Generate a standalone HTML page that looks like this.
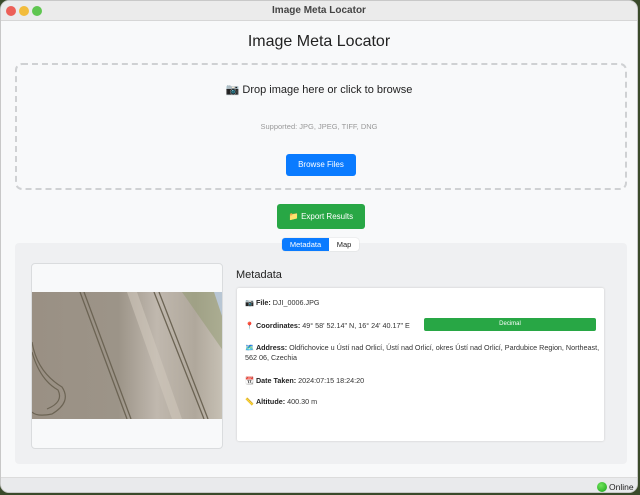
<!DOCTYPE html>
<html><head><meta charset="utf-8"><style>
*{margin:0;padding:0;box-sizing:border-box}
body{width:640px;height:495px;background:#3a4a2a;font-family:"Liberation Sans","DejaVu Sans",sans-serif;position:relative;overflow:hidden}
.win{position:absolute;left:0;top:0;width:638px;height:493px;background:#f8f9fa;border-radius:9px;overflow:hidden;border:1px solid #c8c8c8}
.tb{height:20px;background:#ebebeb;border-bottom:1px solid #d6d6d6;text-align:center;font-size:10px;font-weight:bold;color:#444;line-height:20px;position:relative}
.d{position:absolute;top:5px;width:10px;height:10px;border-radius:50%}
.abs{position:absolute}
h1{position:absolute;left:0;right:0;top:32px;text-align:center;font-size:16px;font-weight:normal;color:#222}
.drop{left:14px;top:62px;width:612px;height:127px;border:2px dashed #cfd1d3;border-radius:7px}
.btn{color:#fff;font-size:8px;text-align:center;border-radius:3px}
.panel{left:14px;top:242px;width:612px;height:221px;background:#eff0f2;border-radius:4px}
.card{left:30px;top:262px;width:192px;height:186px;background:#f8f9fa;border:1px solid #dadcde;border-radius:4px;overflow:hidden}
.meta{left:236px;top:287px;width:367px;height:153px;background:#fff;box-shadow:0 0 2px #c8c8c8;border-radius:2px;font-size:7.2px;color:#333}
.meta div{position:absolute;left:8px}
b{color:#222}
</style></head><body>
<div class="win">
<div class="tb"><span class="d" style="left:5px;background:#ec5f57"></span><span class="d" style="left:18px;background:#f2bc3c"></span><span class="d" style="left:31px;background:#5fc650"></span>Image Meta Locator</div>
<h1>Image Meta Locator</h1>
<div class="abs drop"></div>
<div class="abs" style="left:0;right:0;top:82px;text-align:center;font-size:11px;color:#222">📷 Drop image here or click to browse</div>
<div class="abs" style="left:0;right:0;top:121px;text-align:center;font-size:7.5px;color:#999">Supported: JPG, JPEG, TIFF, DNG</div>
<div class="abs btn" style="left:285px;top:153px;width:70px;height:22px;line-height:22px;background:#0a7bff">Browse Files</div>
<div class="abs btn" style="left:276px;top:203px;width:88px;height:25px;line-height:25px;background:#28a745">📁 Export Results</div>
<div class="abs panel"></div>
<div class="abs" style="left:281px;top:237px;width:77px;height:13px;background:#fff;border-radius:3px;font-size:7.5px;line-height:13px;box-shadow:0 0 1px #bbb"><span style="position:absolute;left:0;width:47px;height:13px;background:#0a7bff;color:#fff;text-align:center;border-radius:3px 0 0 3px">Metadata</span><span style="position:absolute;left:47px;width:30px;text-align:center;color:#222">Map</span></div>
<div class="abs card"><svg class="abs" style="left:0;top:28px" width="192" height="127" viewBox="0 0 192 127">
<defs><linearGradient id="g" x1="0" x2="1"><stop offset="0" stop-color="#9a9084"/><stop offset="0.45" stop-color="#9c9488"/><stop offset="0.65" stop-color="#c0b8ae"/><stop offset="0.85" stop-color="#b0a89c"/><stop offset="1" stop-color="#c8c2b6"/></linearGradient></defs>
<rect width="192" height="127" fill="url(#g)"/>
<path d="M150 0 L192 60 L192 0Z" fill="#8f9a70" opacity="0.5"/>
<path d="M182 0 L192 0 L192 30Z" fill="#b8c6d4"/>
<path d="M48 0 L95 127 M52 0 L99 127 M122 0 L172 127 M127 0 L176 127" stroke="#6c6454" stroke-width="1.3" fill="none"/>
<path d="M0 50 Q5 80 30 95 Q40 110 20 122 Q5 125 0 120 M0 60 Q8 88 26 98 Q32 110 15 117" stroke="#6c6454" stroke-width="1.2" fill="none"/>
<path d="M95 0 L140 127 L150 127 L105 0Z" fill="#cfc7bb" opacity="0.6"/>
</svg></div>
<div class="abs" style="left:235px;top:268px;font-size:11px;color:#222">Metadata</div>
<div class="abs meta">
<div style="top:10px">📷 <b>File:</b> DJI_0006.JPG</div>
<div style="top:33px">📍 <b>Coordinates:</b> 49° 58' 52.14" N, 16° 24' 40.17" E</div>
<div style="left:187px;top:30px;width:172px;height:13px;background:#28a745;color:#fff;text-align:center;line-height:13px;font-size:6px;border-radius:2px">Decimal</div>
<div style="top:55px;width:355px;line-height:10px">🗺️ <b>Address:</b> Oldřichovice u Ústí nad Orlicí, Ústí nad Orlicí, okres Ústí nad Orlicí, Pardubice Region, Northeast, 562 06, Czechia</div>
<div style="top:88px">📆 <b>Date Taken:</b> 2024:07:15 18:24:20</div>
<div style="top:109px">📏 <b>Altitude:</b> 400.30 m</div>
</div>
<div class="abs" style="left:0;top:476px;width:638px;height:17px;background:#e9eaec;border-top:1px solid #dcdcdc"></div>
<div class="abs" style="left:596px;top:481px;width:10px;height:10px;border-radius:50%;background:radial-gradient(circle at 40% 35%,#6fe35a,#19a31a)"></div>
<div class="abs" style="left:608px;top:481px;font-size:8.5px;color:#222">Online</div>
</div>
</body></html>
